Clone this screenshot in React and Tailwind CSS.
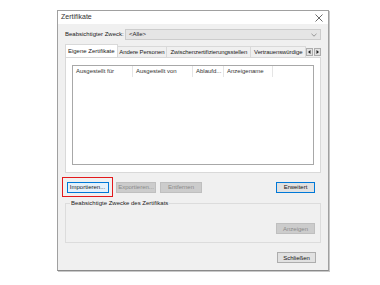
import React from 'react';

const Btn = ({ children, disabled = false, primary = false, className = '' }) => (
  <div
    className={`h-[11px] flex items-center justify-center text-[6px] leading-none border ${
      disabled
        ? 'bg-[#cccccc] border-[#bfbfbf] text-[#8a8a8a]'
        : primary
        ? 'bg-[#e1e1e1] border-[#0078d7] text-[#111]'
        : 'bg-[#e1e1e1] border-[#adadad] text-[#111]'
    } ${className}`}
  >
    {children}
  </div>
);

const tabs = [
  { label: 'Andere Personen', w: 'w-[50px]' },
  { label: 'Zwischenzertifizierungsstellen', w: 'w-[85px]' },
  { label: 'Vertrauenswürdige', w: 'w-[55px]' },
];
const cols = [
  { label: 'Ausgestellt für', w: 'w-[60px]' },
  { label: 'Ausgestellt von', w: 'w-[60px]' },
  { label: 'Ablaufd...', w: 'w-[31px]' },
  { label: 'Anzeigename', w: 'w-[49px]' },
];

export default function App() {
  return (
    <div className="w-[380px] h-[285px] bg-white pt-[10px] pl-[57px] font-['Liberation_Sans',Arial,sans-serif] text-[#222]">
      <div className="w-[272px] h-[261px] border border-[#a0a0a0] border-b-[#8a8a8a] shadow-[1px_1px_0_#c8c8c8] flex flex-col bg-[#f0f0f0]">
        {/* Title bar */}
        <div className="h-[13px] bg-white flex items-center justify-between pl-[3px] pr-[5px]">
          <span className="text-[7px] text-[#333]">Zertifikate</span>
          <svg width="8" height="8" viewBox="0 0 8 8" className="mt-[1px]">
            <path d="M0.5 0.5L7.5 7.5M7.5 0.5L0.5 7.5" stroke="#444" strokeWidth="0.8" />
          </svg>
        </div>

        <div className="flex-1 flex flex-col px-[7px] pt-[5px]">
          {/* Purpose row */}
          <div className="flex items-center h-[11px]">
            <span className="text-[6px] w-[60px] whitespace-nowrap">Beabsichtigter Zweck:</span>
            <div className="flex-1 h-[11px] bg-[#e5e5e5] border border-[#cccccc] flex items-center justify-between pl-[3px] pr-[3px]">
              <span className="text-[6px]">&lt;Alle&gt;</span>
              <svg width="6" height="4" viewBox="0 0 6 4">
                <path d="M0.5 0.8L3 3.2L5.5 0.8" stroke="#777" strokeWidth="0.7" fill="none" />
              </svg>
            </div>
          </div>

          {/* Tabs */}
          <div className="flex items-end h-[13px] mt-[4px]">
            <div className="w-[53px] h-[13px] bg-white border border-[#d9d9d9] border-b-0 flex items-center justify-center text-[6px] whitespace-nowrap">
              Eigene Zertifikate
            </div>
            {tabs.map((t) => (
              <div
                key={t.label}
                className={`${t.w} h-[11px] bg-[#f0f0f0] border border-[#d9d9d9] border-b-0 border-l-0 flex items-center justify-center text-[6px] tracking-[-0.1px] whitespace-nowrap overflow-hidden`}
              >
                {t.label}
              </div>
            ))}
            <div className="flex ml-auto mb-[1px] gap-[1px]">
              <div className="w-[7px] h-[8px] bg-[#e1e1e1] border border-[#adadad] flex items-center justify-center">
                <svg width="3" height="4" viewBox="0 0 3 4"><path d="M2.5 0L0 2L2.5 4Z" fill="#222" /></svg>
              </div>
              <div className="w-[7px] h-[8px] bg-[#e1e1e1] border border-[#adadad] flex items-center justify-center">
                <svg width="3" height="4" viewBox="0 0 3 4"><path d="M0.5 0L3 2L0.5 4Z" fill="#222" /></svg>
              </div>
            </div>
          </div>

          {/* Tab panel */}
          <div className="h-[116px] bg-white border border-[#d9d9d9] px-[6px] pt-[7px] pb-[7px]">
            <div className="h-full border border-[#a8a8a8] bg-white">
              <div className="flex h-[11px]">
                {cols.map((c) => (
                  <div key={c.label} className={`${c.w} h-full border-r border-[#e5e5e5] pl-[3px] flex items-center text-[6px] text-[#333] whitespace-nowrap`}>
                    {c.label}
                  </div>
                ))}
              </div>
            </div>
          </div>

          {/* Buttons row */}
          <div className="flex items-center mt-[4px] h-[20px] -ml-[3px]">
            <div className="w-[51px] h-[20px] border-[1.5px] border-[#e3191c] flex items-center justify-center">
              <div className="w-[42px] h-[11px] bg-[#e5f1fb] border border-[#0078d7] flex items-center justify-center text-[6px]">
                Importieren...
              </div>
            </div>
            <Btn disabled className="w-[40px] ml-[3px]">Exportieren...</Btn>
            <Btn disabled className="w-[42px] ml-[4px]">Entfernen</Btn>
            <Btn primary className="w-[39px] ml-auto mr-[6px]">Erweitert</Btn>
          </div>

          {/* Group box */}
          <fieldset className="mt-[3px] border border-[#dcdcdc] px-[4px]">
            <legend className="text-[6px] px-[1px] leading-none">Beabsichtigte Zwecke des Zertifikats</legend>
            <div className="h-[36px] flex items-end justify-end pr-[1px] pb-[8px]">
              <Btn disabled className="w-[39px]">Anzeigen</Btn>
            </div>
          </fieldset>

          <div className="flex justify-end mt-[9px] pr-[5px]">
            <Btn className="w-[39px]">Schließen</Btn>
          </div>
        </div>
      </div>
    </div>
  );
}
